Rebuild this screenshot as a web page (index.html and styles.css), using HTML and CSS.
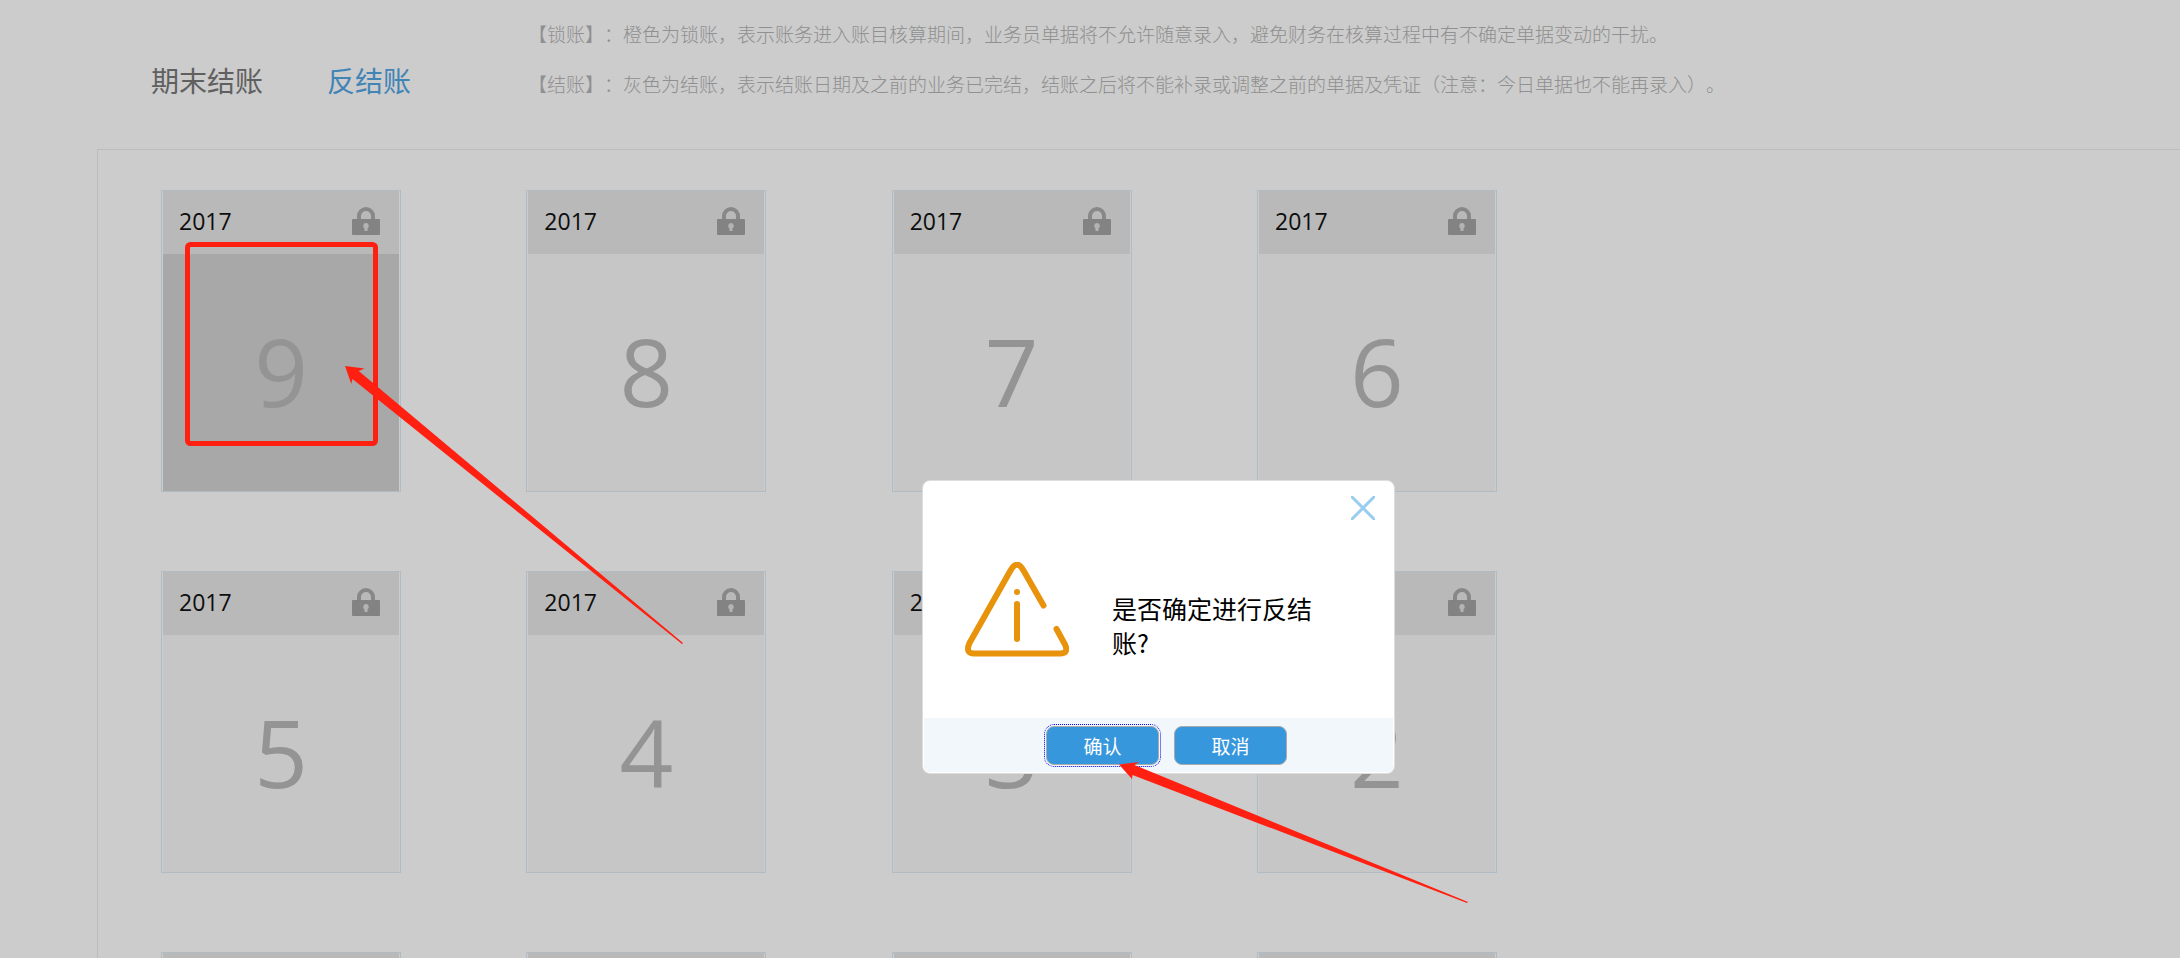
FILE: index.html
```html
<!DOCTYPE html>
<html lang="zh-CN">
<head>
    <meta charset="UTF-8">
    <meta name="viewport" content="width=device-width, initial-scale=1.0">
    <title>反结账</title>
    <link rel="stylesheet" href="styles.css">
</head>
<body>

    <!-- 锁图标 -->
    <svg class="sprite" aria-hidden="true">
        <symbol id="lock" viewBox="0 0 28 28">
            <path d="M7 13V9a7 7 0 0 1 14 0V13" fill="none" stroke="#aaa" stroke-width="4"/>
            <rect x="0" y="12" width="28" height="16" rx="1" fill="#a4a4a4"/>
            <path d="M14 16a3 3 0 0 0-1.500 5.500V24h3v-2.500A3 3 0 0 0 14 16z" fill="#e0e0e0"/>
        </symbol>
    </svg>

    <div class="page">
        <header class="top">
            <nav class="tabs">
                <a href="#close">期末结账</a>
                <a href="#reopen" class="active">反结账</a>
            </nav>
            <div class="tips">
                <p>【锁账】：橙色为锁账，表示账务进入账目核算期间，业务员单据将不允许随意录入，避免财务在核算过程中有不确定单据变动的干扰。</p>
                <p>【结账】：灰色为结账，表示结账日期及之前的业务已完结，结账之后将不能补录或调整之前的单据及凭证（注意：今日单据也不能再录入）。</p>
            </div>
        </header>

        <main class="panel">
            <div class="months">
                <div class="card current">
                    <div class="card-head"><span>2017</span><svg class="lock"><use href="#lock"/></svg></div>
                    <div class="card-body">9</div>
                </div>
                <div class="card">
                    <div class="card-head"><span>2017</span><svg class="lock"><use href="#lock"/></svg></div>
                    <div class="card-body">8</div>
                </div>
                <div class="card">
                    <div class="card-head"><span>2017</span><svg class="lock"><use href="#lock"/></svg></div>
                    <div class="card-body">7</div>
                </div>
                <div class="card">
                    <div class="card-head"><span>2017</span><svg class="lock"><use href="#lock"/></svg></div>
                    <div class="card-body">6</div>
                </div>
                <div class="card">
                    <div class="card-head"><span>2017</span><svg class="lock"><use href="#lock"/></svg></div>
                    <div class="card-body">5</div>
                </div>
                <div class="card">
                    <div class="card-head"><span>2017</span><svg class="lock"><use href="#lock"/></svg></div>
                    <div class="card-body">4</div>
                </div>
                <div class="card">
                    <div class="card-head"><span>2017</span><svg class="lock"><use href="#lock"/></svg></div>
                    <div class="card-body">3</div>
                </div>
                <div class="card">
                    <div class="card-head"><span>2017</span><svg class="lock"><use href="#lock"/></svg></div>
                    <div class="card-body">2</div>
                </div>
                <div class="card"><div class="card-head"></div></div>
                <div class="card"><div class="card-head"></div></div>
                <div class="card"><div class="card-head"></div></div>
                <div class="card"><div class="card-head"></div></div>
            </div>
        </main>
    </div>

    <div class="mask"></div>

    <!-- 确认对话框 -->
    <div class="dialog" role="dialog" aria-labelledby="message">
        <button class="dialog-close" type="button" aria-label="关闭">
            <svg width="24" height="24" viewBox="0 0 24 24"><path d="M0 0L24 24M24 0L0 24" stroke="#98cdf0" stroke-width="3"/></svg>
        </button>
        <div class="dialog-body">
            <svg class="warning" width="104" height="95" viewBox="0 0 104 95" fill="none" stroke="#e8930c" stroke-width="6" stroke-linecap="round" stroke-linejoin="round">
                <path d="M78.500 43.500L58.500 8.500Q52-3 45.500 8.500L4.500 81Q0 91.500 9 91.500H95Q104 91.500 100 82.500L91.500 67"/>
                <path d="M52 42V77"/>
                <circle cx="52" cy="30" r="3" fill="#e8930c" stroke="none"/>
            </svg>
            <p id="message">是否确定进行反结账?</p>
        </div>
        <div class="dialog-foot">
            <button class="btn focused" type="button">确认</button>
            <button class="btn" type="button">取消</button>
        </div>
    </div>

    <!-- 红色标注 -->
    <svg class="marks" aria-hidden="true">
        <rect x="187.500" y="244.500" width="188" height="199" rx="3" fill="none" stroke="#ff2011" stroke-width="5"/>
        <path d="M345 366L364.500 368.500L358.700 371L683 643L682 644L352.500 379L351.300 384z" fill="#ff2011"/>
        <path d="M1119 764.500L1139 762L1134.500 765L1468 902L1467 903L1132.500 775L1132 779z" fill="#ff2011"/>
    </svg>

</body>
</html>
```

FILE: styles.css
```css
* {
    box-sizing: border-box;
}

body {
    margin: 0;
    height: 100vh;
    overflow: hidden;
    position: relative;
    background: #fff;
    font-family: "Open Sans", "Noto Sans CJK SC", sans-serif;
    text-spacing-trim: space-all;
}

p {
    margin: 0;
}

.sprite {
    position: absolute;
    width: 0;
    height: 0;
}

.page {
    height: 100%;
    overflow: hidden;
}

.top {
    display: flex;
    padding: 9px 0 40px 151px;
}

.tabs {
    display: flex;
    gap: 64px;
    width: 377px;
    padding-top: 51px;
    font-size: 28px;
    line-height: 42px;
}

.tabs a {
    color: #787878;
    text-decoration: none;
}

.tabs .active {
    color: #52a6e4;
}

.tips {
    font-family: "Noto Sans CJK SC", sans-serif;
    font-size: 19px;
    font-weight: 300;
    line-height: 50px;
    color: #b4b4b4;
}

.panel {
    margin-left: 97px;
    padding: 40px 0 0 63px;
    border-top: 1px solid #ebebeb;
    border-left: 1px solid #ebebeb;
}

.months {
    display: grid;
    grid-template-columns: repeat(4, 240px);
    justify-content: space-between;
    row-gap: 79px;
    max-width: 1336px;
}

.card {
    height: 302px;
    padding: 0 1px;
    border: 1px solid #dcebf7;
}

.card-head {
    display: flex;
    justify-content: space-between;
    align-items: center;
    height: 63px;
    padding: 0 19px 3px 16px;
    background: #e8e8e8;
    color: #111;
    font-size: 23px;
}

.lock {
    width: 28px;
    height: 28px;
}

.card-body {
    height: 237px;
    background: #f8f8f8;
    color: #b9b9b9;
    font-size: 94px;
    line-height: 234px;
    text-align: center;
}

.current .card-body {
    background: #d2d2d2;
}

.mask {
    position: absolute;
    inset: 0;
    background: rgba(0, 0, 0, 0.2);
}

.dialog {
    position: absolute;
    top: 480px;
    left: 922px;
    width: 473px;
    background: #fff;
    border: 1px solid #ddd;
    border-radius: 8px;
    overflow: hidden;
}

.dialog-close {
    position: absolute;
    top: 15px;
    right: 19px;
    padding: 0;
    border: 0;
    background: none;
    line-height: 0;
}

.dialog-body {
    display: flex;
    gap: 43px;
    height: 237px;
    padding: 81px 70px 0 42px;
}

.warning {
    flex-shrink: 0;
}

.dialog-body p {
    padding-top: 29px;
    font-family: "Noto Sans CJK SC", sans-serif;
    font-size: 25px;
    line-height: 34px;
    color: #000;
}

.dialog-foot {
    display: flex;
    gap: 15px;
    height: 54px;
    margin: 0 1px 1px;
    padding: 8px 0 0 122px;
    background: #f2f7fc;
}

.btn {
    width: 113px;
    height: 39px;
    padding: 0;
    border: 1px solid #aaa;
    border-radius: 8px;
    background: #3797dc;
    color: #fff;
    font-family: "Noto Sans CJK SC", sans-serif;
    font-size: 19px;
}

.btn.focused {
    outline: 1px dotted #00f;
    outline-offset: 1px;
}

.marks {
    position: absolute;
    top: 0;
    left: 0;
    width: 100%;
    height: 100%;
    pointer-events: none;
}
```
